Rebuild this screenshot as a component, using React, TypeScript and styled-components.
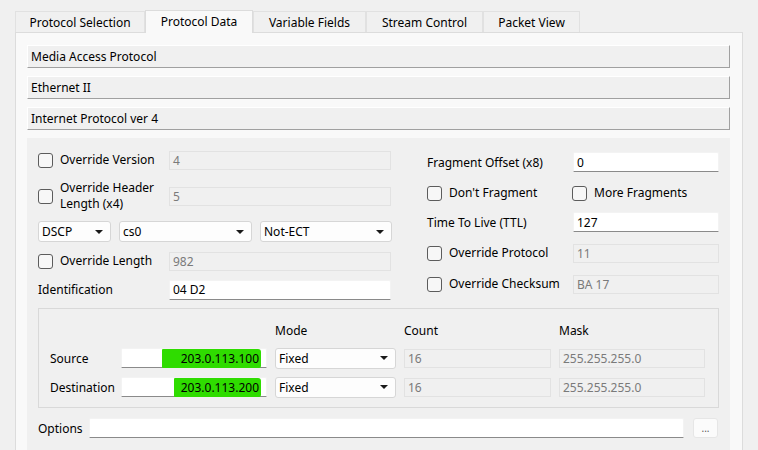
import React from "react";
import styled, { createGlobalStyle } from "styled-components";

const GlobalStyle = createGlobalStyle`
  html, body { margin: 0; padding: 0; background: #f0f0f0; }
  body { font-family: "Noto Sans", "Open Sans", sans-serif; font-size: 12px; color: #000; }
  * { box-sizing: border-box; }
`;

const Window = styled.div`
  width: 758px;
  height: 450px;
  overflow: hidden;
  background: #f0f0f0;
  padding: 10px 0 0 15px;
`;

const TabBar = styled.div`
  display: flex;
  align-items: flex-end;
  height: 22px;
  position: relative;
  z-index: 1;
`;

const Tab = styled.div<{ $active?: boolean; $w: number }>`
  width: ${(p) => p.$w}px;
  height: ${(p) => (p.$active ? 23 : 21)}px;
  margin-bottom: ${(p) => (p.$active ? -1 : 0)}px;
  display: flex;
  align-items: center;
  justify-content: center;
  background: ${(p) => (p.$active ? "#f9f9f9" : "#f0f0f0")};
  border: 1px solid #e1e1e1;
  border-bottom: none;
  ${(p) => (p.$active ? "border-left: 1px solid #dcdcdc; border-right: 1px solid #dcdcdc; border-top: 1px solid #dcdcdc; padding-bottom: 2px;" : "")}
  white-space: nowrap;
`;

const Pane = styled.div`
  width: 728px;
  height: 440px;
  background: #f9f9f9;
  border: 1px solid #dcdcdc;
  padding: 12px 12px 0 11px;
`;

const SectionHeader = styled.div`
  height: 23px;
  background: #f0f0f0;
  border-top: 1px solid #ffffff;
  border-left: 1px solid #ffffff;
  border-right: 1px solid #a0a0a0;
  border-bottom: 1px solid #a0a0a0;
  padding-left: 3px;
  display: flex;
  align-items: center;
  margin-bottom: 8px;
`;

const Content = styled.div`
  background: #f0f0f0;
  height: 400px;
  padding: 12px 11px 0 11px;
`;

const TopSection = styled.div`
  display: flex;
  gap: 35px;
`;

const Column = styled.div`
  display: flex;
  flex-direction: column;
`;

const FieldRow = styled.div<{ $cols: string; $h: number; $mt: number }>`
  display: grid;
  grid-template-columns: ${(p) => p.$cols};
  align-items: center;
  height: ${(p) => p.$h}px;
  margin-top: ${(p) => p.$mt}px;
`;

const CheckLabel = styled.label`
  display: flex;
  align-items: center;
  gap: 7px;
  line-height: 16px;
`;

const Box = styled.span`
  width: 15px;
  height: 15px;
  flex: none;
  border: 1px solid #5c5c5c;
  border-radius: 3px;
  background: #f7f7f7;
`;

const TextInput = styled.div<{ $disabled?: boolean; $align?: string }>`
  height: ${(p) => (p.$disabled ? 19 : 20)}px;
  display: flex;
  align-items: center;
  justify-content: ${(p) => (p.$align === "right" ? "flex-end" : "flex-start")};
  padding: 0 ${(p) => (p.$align === "right" ? "5px" : "0")} 0 3px;
  background: ${(p) => (p.$disabled ? "#f0f0f0" : "#ffffff")};
  color: ${(p) => (p.$disabled ? "#7a7a7a" : "#000")};
  ${(p) =>
    p.$disabled
      ? "border: 1px solid #e2e2e2;"
      : "border: 1px solid #f3f3f3; border-bottom: 1px solid #8a8a8a; border-radius: 2px 2px 0 0;"}
  white-space: nowrap;
`;

const Select = styled.div`
  height: 21px;
  display: flex;
  align-items: center;
  justify-content: space-between;
  padding: 0 7px 0 3px;
  background: #fdfdfd;
  border: 1px solid #d6d6d6;
  border-radius: 3px;
`;

const Arrow = styled.span`
  width: 0;
  height: 0;
  border-left: 4px solid transparent;
  border-right: 4px solid transparent;
  border-top: 4px solid #1a1a1a;
`;

const SelectRow = styled.div`
  display: grid;
  grid-template-columns: 73px 133px 132px;
  column-gap: 8px;
  height: 21px;
  margin-top: 7px;
`;

const Highlight = styled.span`
  background: #2fdc00;
  padding: 1px 2px 1px 0;
  border-radius: 1px 3px 2px 1px;
`;

const Group = styled.div`
  margin-top: 8px;
  width: 681px;
  border: 1px solid #d9d9d9;
  padding: 14px 12px 10px 11px;
  display: grid;
  grid-template-columns: 63px 146px 121px 147px 146px;
  grid-template-rows: 16px 20px 20px;
  column-gap: 8px;
  row-gap: 9px;
  align-items: center;
`;

const ColHead = styled.div`
  line-height: 16px;
`;

const OptionsRow = styled.div`
  margin-top: 10px;
  display: flex;
  align-items: center;
  height: 20px;
`;

const OptionsLabel = styled.div`
  width: 51px;
`;

const OptionsInput = styled(TextInput)`
  width: 595px;
`;

const DotsButton = styled.div`
  margin-left: 9px;
  width: 25px;
  height: 20px;
  border: 1px solid #e6e6e6;
  border-radius: 3px;
  background: #fbfbfb;
  color: #5a5a5a;
  display: flex;
  align-items: flex-end;
  justify-content: center;
  padding-bottom: 4px;
  font-size: 10px;
  line-height: 10px;
`;

const Check = ({ children }: { children: React.ReactNode }) => (
  <CheckLabel>
    <Box />
    <span>{children}</span>
  </CheckLabel>
);

const LEFT_COLS = "131px 222px";
const RIGHT_COLS = "146px 146px";

export default function App() {
  return (
    <>
      <GlobalStyle />
      <Window>
        <TabBar>
          <Tab $w={130}>Protocol Selection</Tab>
          <Tab $w={108} $active>Protocol Data</Tab>
          <Tab $w={113}>Variable Fields</Tab>
          <Tab $w={117}>Stream Control</Tab>
          <Tab $w={97}>Packet View</Tab>
        </TabBar>
        <Pane>
          <SectionHeader>Media Access Protocol</SectionHeader>
          <SectionHeader>Ethernet II</SectionHeader>
          <SectionHeader>Internet Protocol ver 4</SectionHeader>
          <Content>
            <TopSection>
              <Column>
                <FieldRow $cols={LEFT_COLS} $h={20} $mt={0}>
                  <Check>Override Version</Check>
                  <TextInput $disabled>4</TextInput>
                </FieldRow>
                <FieldRow $cols={LEFT_COLS} $h={36} $mt={8}>
                  <Check>
                    Override Header
                    <br />
                    Length (x4)
                  </Check>
                  <TextInput $disabled>5</TextInput>
                </FieldRow>
                <SelectRow>
                  <Select>
                    DSCP <Arrow />
                  </Select>
                  <Select>
                    cs0 <Arrow />
                  </Select>
                  <Select>
                    Not-ECT <Arrow />
                  </Select>
                </SelectRow>
                <FieldRow $cols={LEFT_COLS} $h={20} $mt={9}>
                  <Check>Override Length</Check>
                  <TextInput $disabled>982</TextInput>
                </FieldRow>
                <FieldRow $cols={LEFT_COLS} $h={21} $mt={8}>
                  <span>Identification</span>
                  <TextInput>04 D2</TextInput>
                </FieldRow>
              </Column>
              <Column>
                <FieldRow $cols={RIGHT_COLS} $h={20} $mt={2}>
                  <span>Fragment Offset (x8)</span>
                  <TextInput>0</TextInput>
                </FieldRow>
                <FieldRow $cols={"145px 146px"} $h={20} $mt={11}>
                  <Check>Don't Fragment</Check>
                  <Check>More Fragments</Check>
                </FieldRow>
                <FieldRow $cols={RIGHT_COLS} $h={20} $mt={9}>
                  <span>Time To Live (TTL)</span>
                  <TextInput>127</TextInput>
                </FieldRow>
                <FieldRow $cols={RIGHT_COLS} $h={20} $mt={11}>
                  <Check>Override Protocol</Check>
                  <TextInput $disabled>11</TextInput>
                </FieldRow>
                <FieldRow $cols={RIGHT_COLS} $h={20} $mt={11}>
                  <Check>Override Checksum</Check>
                  <TextInput $disabled>BA 17</TextInput>
                </FieldRow>
              </Column>
            </TopSection>

            <Group>
              <span />
              <span />
              <ColHead>Mode</ColHead>
              <ColHead>Count</ColHead>
              <ColHead>Mask</ColHead>

              <span>Source</span>
              <TextInput $align="right">
                <Highlight>&nbsp;&nbsp;&nbsp;&nbsp;&nbsp;&nbsp;203.0.113.100</Highlight>
              </TextInput>
              <Select>
                Fixed <Arrow />
              </Select>
              <TextInput $disabled>16</TextInput>
              <TextInput $disabled>255.255.255.0</TextInput>

              <span>Destination</span>
              <TextInput $align="right">
                <Highlight>&nbsp;&nbsp;203.0.113.200</Highlight>
              </TextInput>
              <Select>
                Fixed <Arrow />
              </Select>
              <TextInput $disabled>16</TextInput>
              <TextInput $disabled>255.255.255.0</TextInput>
            </Group>

            <OptionsRow>
              <OptionsLabel>Options</OptionsLabel>
              <OptionsInput />
              <DotsButton>...</DotsButton>
            </OptionsRow>
          </Content>
        </Pane>
      </Window>
    </>
  );
}
